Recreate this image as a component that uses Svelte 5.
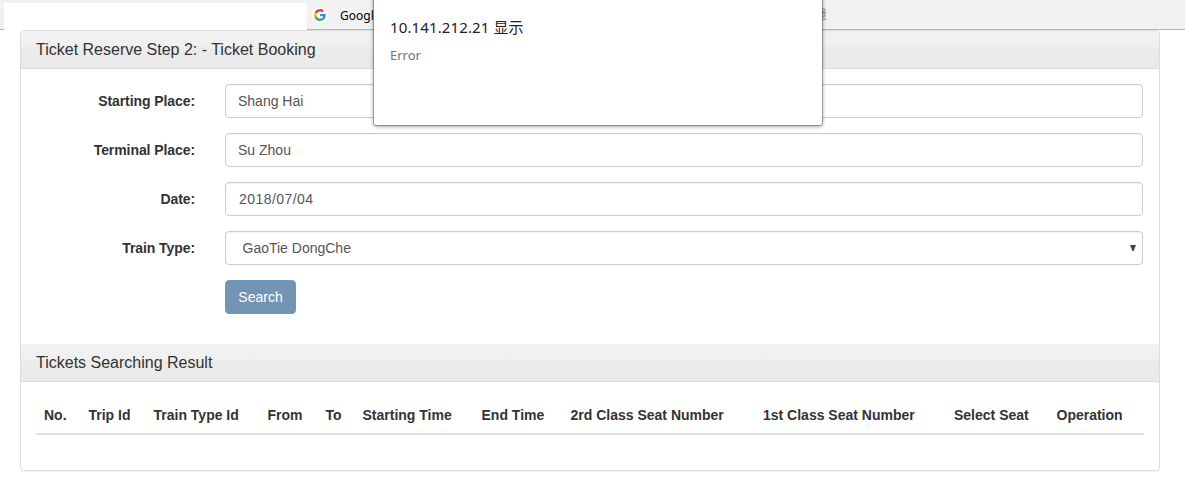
<script>
  const fields = [
    { label: 'Starting Place:', value: 'Shang Hai', kind: '' },
    { label: 'Terminal Place:', value: 'Su Zhou', kind: '' },
    { label: 'Date:', value: '2018/07/04', kind: 'date' },
    { label: 'Train Type:', value: 'GaoTie DongChe', kind: 'select' }
  ];
  const columns = [
    ['No.', 44.5], ['Trip Id', 65], ['Train Type Id', 114],
    ['From', 58], ['To', 37], ['Starting Time', 119], ['End Time', 89],
    ['2rd Class Seat Number', 192.5], ['1st Class Seat Number', 191],
    ['Select Seat', 102.5], ['Operation', 95.5]
  ];
</script>

<div class="page">
  <div class="toolbar">
    <div class="blank"></div>
    <div class="bookmark">
      <span class="favicon">
        <svg width="12" height="12" viewBox="0 0 48 48">
          <path fill="#EA4335" d="M24 9.5c3.54 0 6.71 1.22 9.21 3.6l6.85-6.85C35.9 2.38 30.47 0 24 0 14.62 0 6.51 5.38 2.56 13.22l7.98 6.19C12.43 13.72 17.74 9.5 24 9.5z" />
          <path fill="#4285F4" d="M46.98 24.55c0-1.57-.15-3.09-.38-4.55H24v9.02h12.94c-.58 2.96-2.26 5.48-4.78 7.18l7.73 6c4.51-4.18 7.09-10.36 7.09-17.65z" />
          <path fill="#FBBC05" d="M10.53 28.59A14.5 14.5 0 0 1 9.77 24c0-1.6.28-3.14.76-4.59l-7.98-6.19A23.9 23.9 0 0 0 0 24c0 3.88.92 7.54 2.56 10.78z" />
          <path fill="#34A853" d="M24 48c6.48 0 11.93-2.13 15.89-5.81l-7.73-6c-2.15 1.45-4.92 2.3-8.16 2.3-6.26 0-11.57-4.22-13.47-9.91l-7.98 6.19C6.51 42.62 14.62 48 24 48z" />
        </svg>
      </span>
      <span class="name">Google</span>
    </div>
    <span class="tail">量</span>
  </div>

  <main class="panel">
    <h3>Ticket Reserve Step 2: - Ticket Booking</h3>
    <div class="form">
      {#each fields as f}
        <div class="row">
          <span class="label">{f.label}</span>
          <div class="control {f.kind}">
            <span>{f.value}</span>
            {#if f.kind === 'select'}
              <svg class="arrow" width="6" height="6" viewBox="0 0 6 6"><path d="M0 0h6L3.6 6h-1.2z" fill="#444" /></svg>
            {/if}
          </div>
        </div>
      {/each}
      <button>Search</button>
    </div>
    <h3>Tickets Searching Result</h3>
    <div class="thead">
      {#each columns as [name, w]}
        <div class="th" style="width: {w}px">{name}</div>
      {/each}
    </div>
  </main>

  <div class="dialog">
    <div class="origin">10.141.212.21 显示</div>
    <div class="message">Error</div>
  </div>
</div>

<style>
  :global(body) { background: #fff; }
  .page {
    position: relative;
    width: 1185px;
    height: 484px;
    overflow: hidden;
    font: 14px/20px "Liberation Sans", Arial, sans-serif;
    color: #333;
  }
  .page, .page * { box-sizing: border-box; }
  .toolbar {
    display: flex;
    height: 30px;
    padding-left: 4px;
    background: linear-gradient(to right, #f1f1f1, #f1f1f1) no-repeat;
    border-bottom: 1px solid #b6b6b6;
    font: 12px/16px "Noto Sans", "Noto Sans CJK SC", sans-serif;
    color: #000;
  }
  .blank { width: 303px; height: 27px; margin-top: 3px; background: #fff; }
  .bookmark { display: flex; width: 505px; padding: 7px 0 0 5px; }
  .favicon {
    display: flex;
    align-items: center;
    justify-content: center;
    width: 16px;
    height: 16px;
    border-radius: 50%;
    background: #fff;
  }
  .name { margin-left: 12px; padding-top: 1px; }
  .tail { margin-left: 3px; padding-top: 7px; color: #888; }
  .panel {
    width: 1140px;
    height: 441px;
    margin-left: 20px;
    border: 1px solid #ddd;
    border-radius: 4px;
    box-shadow: 0 1px 1px rgba(0, 0, 0, .05);
  }
  h3 {
    height: 38px;
    margin: 0;
    padding: 10px 15px 0;
    font-size: 16px;
    line-height: 18px;
    font-weight: 400;
    background: linear-gradient(#f1f1f1 0, #f0f0f0 15px, #ebebeb 17px, #eaeaea 100%);
    border-bottom: 1px solid #ddd;
    border-radius: 3px 3px 0 0;
  }
  .form { height: 275px; padding: 15px 16px 0 15px; }
  .row { display: flex; height: 34px; margin-bottom: 15px; }
  .label {
    width: 159px;
    margin-right: 30px;
    padding-top: 7px;
    text-align: right;
    font-weight: 700;
    letter-spacing: -.08px;
  }
  .control {
    display: flex;
    flex: 1;
    align-items: center;
    justify-content: space-between;
    padding: 0 12px;
    color: #555;
    border: 1px solid #ccc;
    border-radius: 4px;
    box-shadow: inset 0 1px 1px rgba(0, 0, 0, .04);
  }
  .date { padding-left: 13px; letter-spacing: .45px; }
  .select { padding: 0 6px 0 16.5px; }
  .arrow { display: block; }
  button {
    display: block;
    width: 71px;
    height: 34px;
    margin-left: 189px;
    padding: 0;
    font: inherit;
    color: #fff;
    background: #7494b4;
    border: 1px solid #6f9abf;
    border-radius: 4px;
  }
  .thead {
    display: flex;
    width: 1108px;
    height: 53px;
    margin-left: 15px;
    padding-top: 23px;
    border-bottom: 2px solid #ddd;
  }
  .th { flex: none; padding-left: 8px; font-weight: 700; white-space: nowrap; }
  .dialog {
    position: absolute;
    top: -4px;
    left: 374px;
    width: 448px;
    height: 129px;
    padding: 21px 16px;
    background: #fff;
    border-radius: 2px;
    box-shadow: 0 0 0 1px rgba(0, 0, 0, .22), 0 1px 4px rgba(0, 0, 0, .5);
    font-family: "Noto Sans", "Noto Sans CJK SC", sans-serif;
  }
  .origin { font-size: 15px; line-height: 20px; letter-spacing: .12px; color: #222; }
  .message { margin-top: 9px; font-size: 13px; line-height: 18px; color: #757575; }
</style>
